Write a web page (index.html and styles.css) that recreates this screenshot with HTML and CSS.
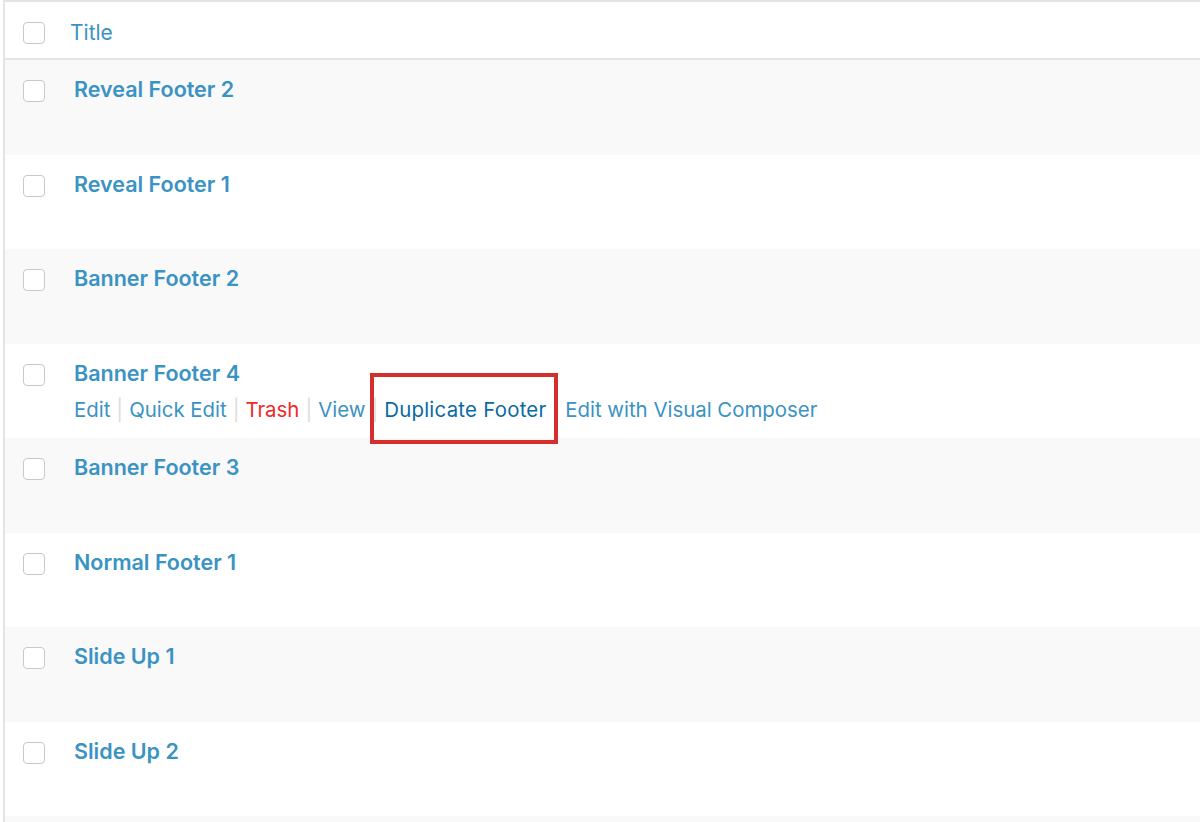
FILE: index.html
```html
<!DOCTYPE html>
<html lang="en">
<head>
<meta charset="utf-8">
<title>Footers</title>
<link rel="stylesheet" href="styles.css">
</head>
<body>
<div class="list">
  <div class="head">
    <span class="cb"></span>
    <span class="head-title">Title</span>
  </div>
  <div class="row alt">
    <span class="cb"></span>
    <div class="cell"><a class="title">Reveal Footer 2</a></div>
  </div>
  <div class="row">
    <span class="cb"></span>
    <div class="cell"><a class="title">Reveal Footer 1</a></div>
  </div>
  <div class="row alt">
    <span class="cb"></span>
    <div class="cell"><a class="title">Banner Footer 2</a></div>
  </div>
  <div class="row">
    <span class="cb"></span>
    <div class="cell">
      <a class="title">Banner Footer 4</a>
      <div class="actions">
        <a class="act">Edit</a><span class="sep">|</span><a class="act">Quick Edit</a><span class="sep">|</span><a class="act trash">Trash</a><span class="sep">|</span><a class="act">View</a><span class="sep">|</span><a class="act dup">Duplicate Footer</a><span class="sep">|</span><a class="act">Edit with Visual Composer</a>
      </div>
    </div>
  </div>
  <div class="row alt">
    <span class="cb"></span>
    <div class="cell"><a class="title">Banner Footer 3</a></div>
  </div>
  <div class="row">
    <span class="cb"></span>
    <div class="cell"><a class="title">Normal Footer 1</a></div>
  </div>
  <div class="row alt">
    <span class="cb"></span>
    <div class="cell"><a class="title">Slide Up 1</a></div>
  </div>
  <div class="row">
    <span class="cb"></span>
    <div class="cell"><a class="title">Slide Up 2</a></div>
  </div>
  <div class="row alt"></div>
</div>
</body>
</html>
```

FILE: styles.css
```css
html, body {
  margin: 0;
  padding: 0;
  background: #ffffff;
  overflow: hidden;
}
body {
  font-family: Inter, "Liberation Sans", sans-serif;
  padding: 0 0 0 3px;
}
.list {
  border-top: 2px solid #e4e4e4;
  border-left: 2px solid #e4e4e4;
}
.head {
  display: flex;
  align-items: flex-start;
  height: 56px;
  border-bottom: 2px solid #e4e4e4;
  background: #fff;
}
.cb {
  flex: none;
  box-sizing: border-box;
  width: 22px;
  height: 22px;
  margin: 20px 29px 0 18px;
  border: 1px solid #c9c9c9;
  border-radius: 4px;
  background: #fff;
}
.head .cb {
  margin-top: 20px;
}
.head-title {
  margin-top: 17px;
  margin-left: -4px;
  font-size: 21px;
  line-height: 28px;
  color: #3a93c3;
}
.row {
  display: flex;
  align-items: flex-start;
  height: 94.5px;
  background: #ffffff;
}
.row.alt {
  background: #f9f9f9;
}
.cell {
  padding-top: 15px;
  padding-left: 0;
}
.title {
  display: block;
  font-size: 21.5px;
  line-height: 28px;
  font-weight: 600;
  color: #3a93c3;
}
.actions {
  margin-top: 9px;
  font-size: 20.4px;
  line-height: 28px;
  color: #3a93c3;
  white-space: nowrap;
}
.sep {
  color: #dcdcdc;
  margin: 0 6px;
}
.trash {
  color: #f02a2a;
}
.dup {
  position: relative;
  color: #0a6aa4;
  letter-spacing: 0.25px;
}
.dup::after {
  content: "";
  position: absolute;
  left: -14px;
  right: -12px;
  top: -24px;
  bottom: -22px;
  border: 4px solid #d42f2c;
}
```
